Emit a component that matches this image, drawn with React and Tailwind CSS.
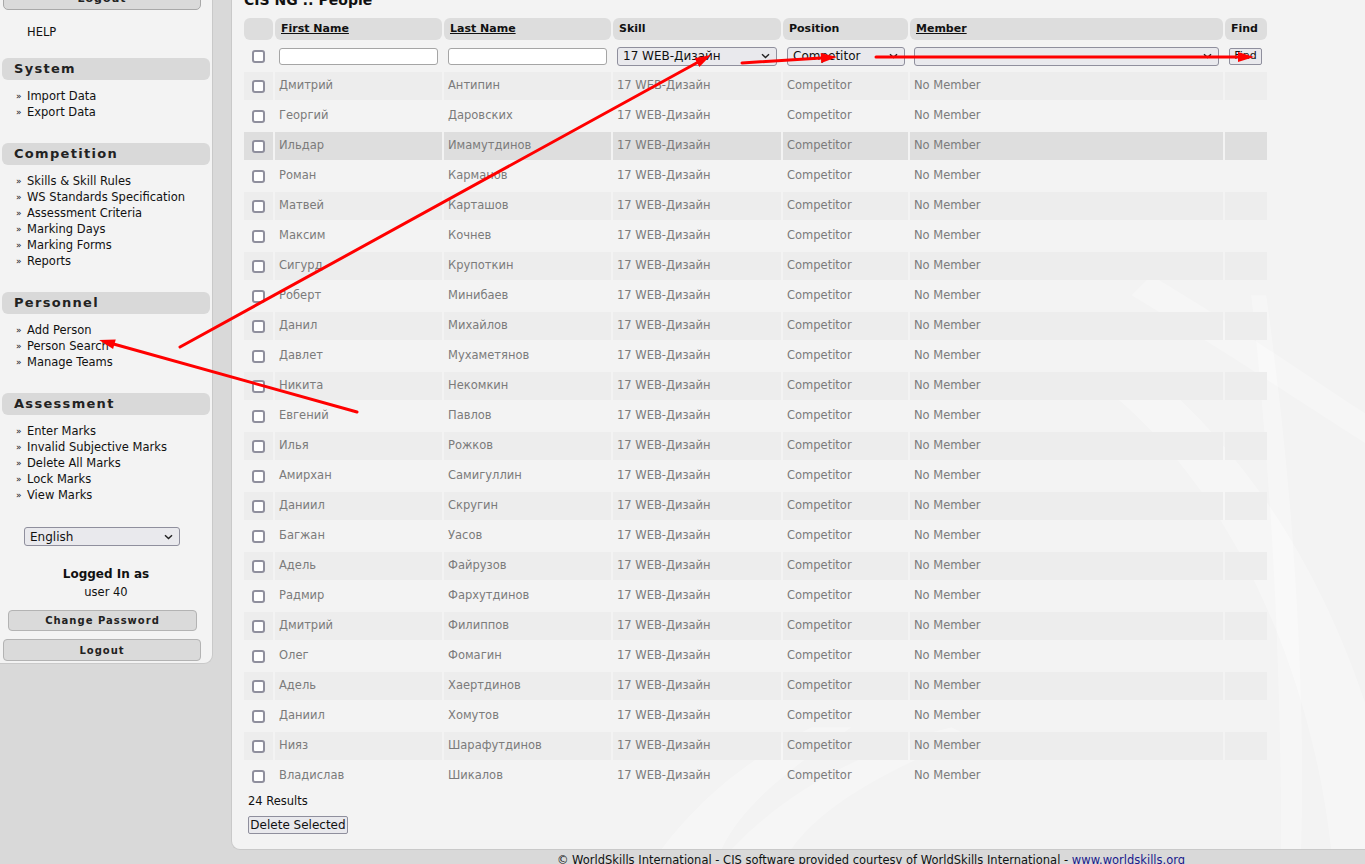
import React from "react";

const people = [
  ["Дмитрий", "Антипин"],
  ["Георгий", "Даровских"],
  ["Ильдар", "Имамутдинов"],
  ["Роман", "Карманов"],
  ["Матвей", "Карташов"],
  ["Максим", "Кочнев"],
  ["Сигурд", "Крупоткин"],
  ["Роберт", "Минибаев"],
  ["Данил", "Михайлов"],
  ["Давлет", "Мухаметянов"],
  ["Никита", "Некомкин"],
  ["Евгений", "Павлов"],
  ["Илья", "Рожков"],
  ["Амирхан", "Самигуллин"],
  ["Даниил", "Скругин"],
  ["Багжан", "Уасов"],
  ["Адель", "Файрузов"],
  ["Радмир", "Фархутдинов"],
  ["Дмитрий", "Филиппов"],
  ["Олег", "Фомагин"],
  ["Адель", "Хаертдинов"],
  ["Даниил", "Хомутов"],
  ["Нияз", "Шарафутдинов"],
  ["Владислав", "Шикалов"],
];

const COLS = "grid grid-cols-[29px_167px_167px_168px_125px_313px_42px] gap-x-[2px]";

function Checkbox() {
  return (
    <span className="block w-[13px] h-[13px] rounded-[3px] border-2 border-[#8f8f9d] bg-white" />
  );
}

function Chevron() {
  return (
    <svg width="9" height="6" viewBox="0 0 9 6" className="shrink-0">
      <path d="M1 1.2 L4.5 4.6 L8 1.2" fill="none" stroke="#222" strokeWidth="1.4" />
    </svg>
  );
}

function FakeSelect({ w, text }) {
  return (
    <div
      className={`${w} h-[19px] rounded-[3px] border border-[#8f8f9d] bg-[#e9e9ed] flex items-center justify-between pl-[5px] pr-[6px] text-[12px] text-[#111]`}
    >
      <span className="leading-none">{text}</span>
      <Chevron />
    </div>
  );
}

function SideHeader({ children }) {
  return (
    <div className="mx-[2px] h-[22px] rounded-[6px] bg-[#d9d9d9] pl-[12px] flex items-center text-[13px] font-bold tracking-[1.3px] text-[#222]">
      {children}
    </div>
  );
}

function SideLinks({ items }) {
  return (
    <ul className="pt-[8px] text-[11.5px] text-[#111]">
      {items.map((t) => (
        <li key={t} className="h-[16px] leading-[16px] pl-[16px] whitespace-nowrap flex items-center">
          <span className="text-[9px] leading-none w-[11px]">»</span>
          <span>{t}</span>
        </li>
      ))}
    </ul>
  );
}

function Sidebar() {
  return (
    <aside className="w-[213px] shrink-0 -mt-[20px] pt-[8px] pb-[2px] bg-[#f3f3f3] border-r border-b border-[#c9c9c9] rounded-br-[9px]">
      <div className="mx-[3px] w-[198px] h-[22px] rounded-[5px] bg-[#dadada] border border-[#a9a9a9] flex items-center justify-center text-[11px] font-bold tracking-[1px] text-[#222]">
        Logout
      </div>
      <div className="mt-[14px] pl-[27px] text-[11.5px] leading-[16px] text-[#111]">HELP</div>
      <div className="mt-[18px]">
        <SideHeader>System</SideHeader>
        <SideLinks items={["Import Data", "Export Data"]} />
      </div>
      <div className="mt-[23px]">
        <SideHeader>Competition</SideHeader>
        <SideLinks
          items={[
            "Skills & Skill Rules",
            "WS Standards Specification",
            "Assessment Criteria",
            "Marking Days",
            "Marking Forms",
            "Reports",
          ]}
        />
      </div>
      <div className="mt-[23px]">
        <SideHeader>Personnel</SideHeader>
        <SideLinks items={["Add Person", "Person Search", "Manage Teams"]} />
      </div>
      <div className="mt-[23px]">
        <SideHeader>Assessment</SideHeader>
        <SideLinks
          items={[
            "Enter Marks",
            "Invalid Subjective Marks",
            "Delete All Marks",
            "Lock Marks",
            "View Marks",
          ]}
        />
      </div>
      <div className="mt-[24px] pl-[24px]">
        <FakeSelect w="w-[156px]" text="English" />
      </div>
      <div className="mt-[20px] text-center text-[12px] leading-[16px] font-bold text-[#111]">Logged In as</div>
      <div className="mt-[2px] text-center text-[11.5px] leading-[16px] text-[#111]">user 40</div>
      <div className="mt-[10px] mx-[8px] w-[189px] h-[21px] rounded-[4px] bg-[#dadada] border border-[#b3b3b3] flex items-center justify-center text-[10px] font-bold tracking-[1px] text-[#222]">
        Change Password
      </div>
      <div className="mt-[8px] mx-[3px] w-[198px] h-[22px] rounded-[4px] bg-[#dadada] border border-[#b3b3b3] flex items-center justify-center text-[10px] font-bold tracking-[1px] text-[#222]">
        Logout
      </div>
    </aside>
  );
}

function HeaderRow() {
  const cell = "h-[22px] rounded-[6px] bg-[#dddddd] pl-[6px] flex items-center text-[11px] font-bold text-[#111]";
  return (
    <div className={COLS}>
      <div className={cell} />
      <div className={cell}><span className="underline">First Name</span></div>
      <div className={cell}><span className="underline">Last Name</span></div>
      <div className={cell}>Skill</div>
      <div className={cell}>Position</div>
      <div className={cell}><span className="underline">Member</span></div>
      <div className={cell}>Find</div>
    </div>
  );
}

function FilterRow() {
  return (
    <div className={`${COLS} h-[28px] items-center`}>
      <div className="flex justify-center"><Checkbox /></div>
      <div className="pl-[4px]">
        <div className="w-[159px] h-[17px] rounded-[3px] border border-[#a5a5a5] bg-white" />
      </div>
      <div className="pl-[4px]">
        <div className="w-[159px] h-[17px] rounded-[3px] border border-[#a5a5a5] bg-white" />
      </div>
      <div className="pl-[4px]">
        <FakeSelect w="w-[160px]" text="17 WEB-Дизайн" />
      </div>
      <div className="pl-[4px]">
        <FakeSelect w="w-[118px]" text="Competitor" />
      </div>
      <div className="pl-[4px]">
        <FakeSelect w="w-[305px]" text="" />
      </div>
      <div className="pl-[4px]">
        <div className="w-[33px] h-[17px] rounded-[2px] border border-[#8f8f9d] bg-[#e9e9ed] flex items-center justify-center text-[11px] text-[#111]">
          Find
        </div>
      </div>
    </div>
  );
}

function DataRow({ first, last, i }) {
  const bg = i === 2 ? "bg-[#dedede]" : i % 2 === 0 ? "bg-[#ededed]" : "";
  const cell = `${bg} h-[28px] flex items-center pl-[4px] text-[11.5px] text-[#7b7b7b] whitespace-nowrap`;
  return (
    <div className={COLS}>
      <div className={`${bg} h-[28px] flex items-center justify-center`}><Checkbox /></div>
      <div className={cell}>{first}</div>
      <div className={cell}>{last}</div>
      <div className={cell}>17 WEB-Дизайн</div>
      <div className={cell}>Competitor</div>
      <div className={cell}>No Member</div>
      <div className={cell} />
    </div>
  );
}

function Swooshes() {
  return (
    <svg className="absolute inset-0 w-full h-full pointer-events-none" viewBox="0 0 1280 884" preserveAspectRatio="none">
      <path d="M880 420 C 1000 520, 1080 700, 1100 884 L 1170 884 C 1140 700, 1060 520, 920 400 Z" fill="#ffffff" opacity="0.3" />
      <path d="M920 300 C 1020 360, 1100 420, 1180 470 L 1180 500 C 1100 450, 1000 380, 900 320 Z" fill="#ffffff" opacity="0.25" />
      <path d="M1150 420 C 1180 600, 1160 760, 1150 884 L 1280 884 L 1280 300 C 1240 340, 1200 380, 1150 420 Z" fill="#ffffff" opacity="0.22" />
      <path d="M1020 320 C 1040 500, 1050 700, 1050 884 L 1070 884 C 1075 700, 1060 500, 1035 320 Z" fill="#ffffff" opacity="0.3" />
      <path d="M430 884 C 470 830, 520 790, 580 760 L 620 760 C 560 800, 510 840, 490 884 Z" fill="#ffffff" opacity="0.3" />
      <path d="M500 884 C 560 820, 640 780, 720 760 L 740 770 C 660 800, 590 840, 560 884 Z" fill="#ffffff" opacity="0.25" />
    </svg>
  );
}

function Main() {
  return (
    <main className="relative ml-[18px] w-[1280px] shrink-0 -mt-[19px] pt-[10px] pb-[15px] pl-[12px] bg-[#f3f3f3] border-l border-b border-[#c9c9c9] rounded-bl-[9px] overflow-hidden">
      <Swooshes />
      <div className="relative">
        <h1 className="h-[18px] leading-[18px] text-[14px] font-bold text-[#111] mb-[9px]">CIS NG :: People</h1>
        <div className="flex flex-col gap-y-[2px]">
          <HeaderRow />
          <FilterRow />
          {people.map(([f, l], i) => (
            <DataRow key={i} first={f} last={l} i={i} />
          ))}
        </div>
        <div className="mt-[3px] pl-[4px] text-[11.5px] leading-[16px] text-[#111]">24 Results</div>
        <div className="mt-[7px] ml-[4px] w-[100px] h-[18px] rounded-[2px] border border-[#8f8f9d] bg-[#e9e9ed] flex items-center justify-center text-[12px] text-[#111]">
          Delete Selected
        </div>
      </div>
    </main>
  );
}

function Arrow({ x1, y1, x2, y2 }) {
  const ang = Math.atan2(y2 - y1, x2 - x1);
  const L = 16;
  const W = 5;
  const bx = x2 - L * Math.cos(ang);
  const by = y2 - L * Math.sin(ang);
  const px = -Math.sin(ang) * W;
  const py = Math.cos(ang) * W;
  return (
    <g>
      <line x1={x1} y1={y1} x2={bx} y2={by} stroke="#ff0000" strokeWidth="3" strokeLinecap="round" />
      <polygon points={`${x2},${y2} ${bx + px},${by + py} ${bx - px},${by - py}`} fill="#ff0000" />
    </g>
  );
}

export default function App() {
  return (
    <div className="relative h-[864px] w-[1365px] overflow-hidden bg-[#d9d9d9] font-['DejaVu_Sans','Verdana',sans-serif]">
      <div className="flex items-start">
        <Sidebar />
        <Main />
      </div>
      <div className="ml-[231px] w-[1280px] pt-[2px] text-center text-[11.5px] leading-[16px] text-[#111] whitespace-nowrap">
        © WorldSkills International - CIS software provided courtesy of WorldSkills International -{" "}
        <span className="text-[#1a1a8c]">www.worldskills.org</span>
      </div>
      <svg className="absolute inset-0 pointer-events-none" width="1365" height="864">
        <Arrow x1={180} y1={347} x2={711} y2={55} />
        <Arrow x1={357} y1={412} x2={99} y2={340} />
        <Arrow x1={742} y1={63} x2={837} y2={57} />
        <Arrow x1={876} y1={57} x2={1254} y2={57} />
      </svg>
    </div>
  );
}
